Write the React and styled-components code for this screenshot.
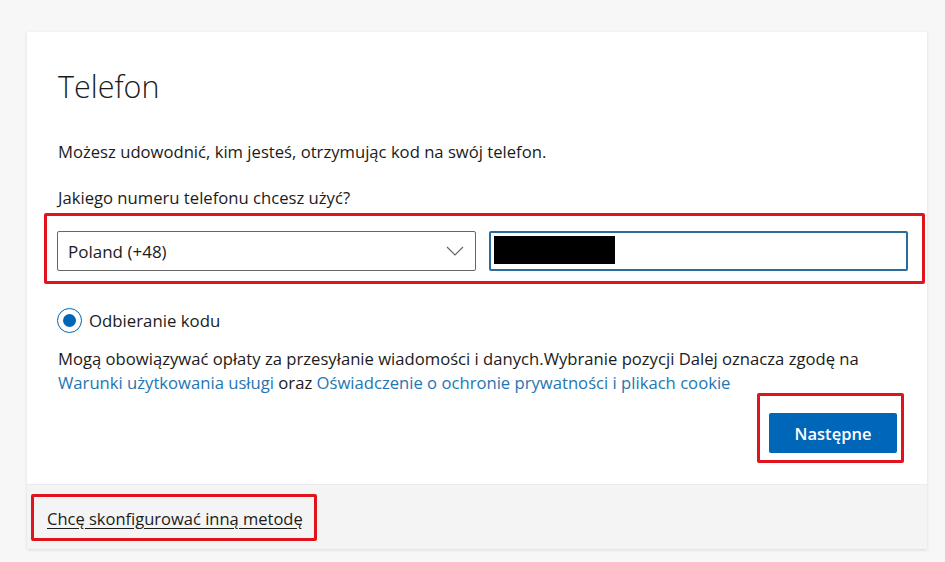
import React, { useState } from 'react';
import styled, { createGlobalStyle } from 'styled-components';

const GlobalStyle = createGlobalStyle`
  html, body {
    margin: 0;
    padding: 0;
    background: #f7f7f7;
    font-family: 'Open Sans', 'Noto Sans', sans-serif;
    color: #1b1b1b;
  }
`;

const Page = styled.div`
  padding: 32px 0 13px 27px;
`;

const Card = styled.div`
  width: 900px;
  background: #fff;
  box-shadow: 0 1px 3px rgba(0, 0, 0, 0.12);
`;

const Main = styled.div`
  height: 452px;
  box-sizing: border-box;
  padding: 34px 19px 0 31px;
  display: flex;
  flex-direction: column;
`;

const Title = styled.h1`
  margin: 0;
  font-size: 30.5px;
  font-weight: 300;
  line-height: 40px;
  color: #1b1b1b;
`;

const Text = styled.p`
  margin: ${(p) => p.$mt || 0}px 0 0 0;
  font-size: 16.65px;
  line-height: 24px;
`;

const Highlight = styled.div`
  border: 3px solid #e0141c;
  border-radius: 2px;
  margin: ${(p) => p.$margin};
  padding: ${(p) => p.$padding};
`;

const PhoneRow = styled.div`
  display: grid;
  grid-template-columns: 1fr 1fr;
  gap: 13px;
`;

const SelectBox = styled.div`
  position: relative;
  height: 40px;
  box-sizing: border-box;
  border: 1px solid #666;
  border-radius: 2px;
  display: flex;
  align-items: center;
  padding: 0 10px;
  font-size: 17px;
`;

const Chevron = styled.svg`
  position: absolute;
  right: 11px;
  top: 13px;
`;

const PhoneInput = styled.div`
  height: 40px;
  box-sizing: border-box;
  border: 2px solid #2a6c9c;
  border-radius: 2px;
  padding: 3px;
`;

const Redacted = styled.div`
  width: 121px;
  height: 28px;
  background: #000;
`;

const RadioRow = styled.label`
  display: flex;
  align-items: center;
  gap: 7px;
  margin-top: 24px;
  margin-left: -1px;
  font-size: 16.8px;
  cursor: pointer;
`;

const RadioCircle = styled.span`
  width: 25px;
  height: 25px;
  box-sizing: border-box;
  border: 1px solid #0067b8;
  border-radius: 50%;
  display: flex;
  align-items: center;
  justify-content: center;
  &::after {
    content: '';
    width: 13px;
    height: 13px;
    border-radius: 50%;
    background: ${(p) => (p.$checked ? '#0067b8' : 'transparent')};
  }
`;

const Link = styled.a`
  color: #2376b3;
  text-decoration: none;
  cursor: pointer;
`;

const Actions = styled.div`
  display: flex;
  justify-content: flex-end;
`;

const PrimaryButton = styled.button`
  width: 128px;
  height: 40px;
  border: none;
  border-radius: 2px;
  background: #0067b8;
  color: #fff;
  font-family: inherit;
  font-size: 16.5px;
  font-weight: 600;
  cursor: pointer;
`;

const Footer = styled.div`
  height: 65px;
  box-sizing: border-box;
  background: #f4f4f4;
  border-top: 1px solid #ececec;
  display: flex;
  align-items: center;
`;

const FooterLink = styled.a`
  color: #1b1b1b;
  font-size: 16.5px;
  text-decoration: underline;
  text-underline-offset: 3px;
  cursor: pointer;
`;

export default function App() {
  const [checked, setChecked] = useState(true);

  return (
    <>
      <GlobalStyle />
      <Page>
        <Card>
          <Main>
            <Title>Telefon</Title>
            <Text $mt={34}>Możesz udowodnić, kim jesteś, otrzymując kod na swój telefon.</Text>
            <Text $mt={22}>Jakiego numeru telefonu chcesz użyć?</Text>
            <Highlight $margin="3px -17px 0 -14px" $padding="15px 14px 10px 10px">
              <PhoneRow>
                <SelectBox>
                  Poland (+48)
                  <Chevron width="18" height="12" viewBox="0 0 18 12">
                    <path d="M1 2 L9 10 L17 2" fill="none" stroke="#666" strokeWidth="1.2" />
                  </Chevron>
                </SelectBox>
                <PhoneInput>
                  <Redacted />
                </PhoneInput>
              </PhoneRow>
            </Highlight>
            <RadioRow onClick={() => setChecked(true)}>
              <RadioCircle $checked={checked} />
              Odbieranie kodu
            </RadioRow>
            <Text $mt={14}>
              Mogą obowiązywać opłaty za przesyłanie wiadomości i danych.Wybranie pozycji Dalej oznacza zgodę na
              <br />
              <Link>Warunki użytkowania usługi</Link> oraz{' '}
              <Link>Oświadczenie o ochronie prywatności i plikach cookie</Link>
            </Text>
            <Actions>
              <Highlight $margin="-2px 4px 0 0" $padding="17px 4px 7px 9px">
                <PrimaryButton>Następne</PrimaryButton>
              </Highlight>
            </Actions>
          </Main>
          <Footer>
            <Highlight $margin="0 0 0 4px" $padding="10px 11px 8px 13px">
              <FooterLink>Chcę skonfigurować inną metodę</FooterLink>
            </Highlight>
          </Footer>
        </Card>
      </Page>
    </>
  );
}
